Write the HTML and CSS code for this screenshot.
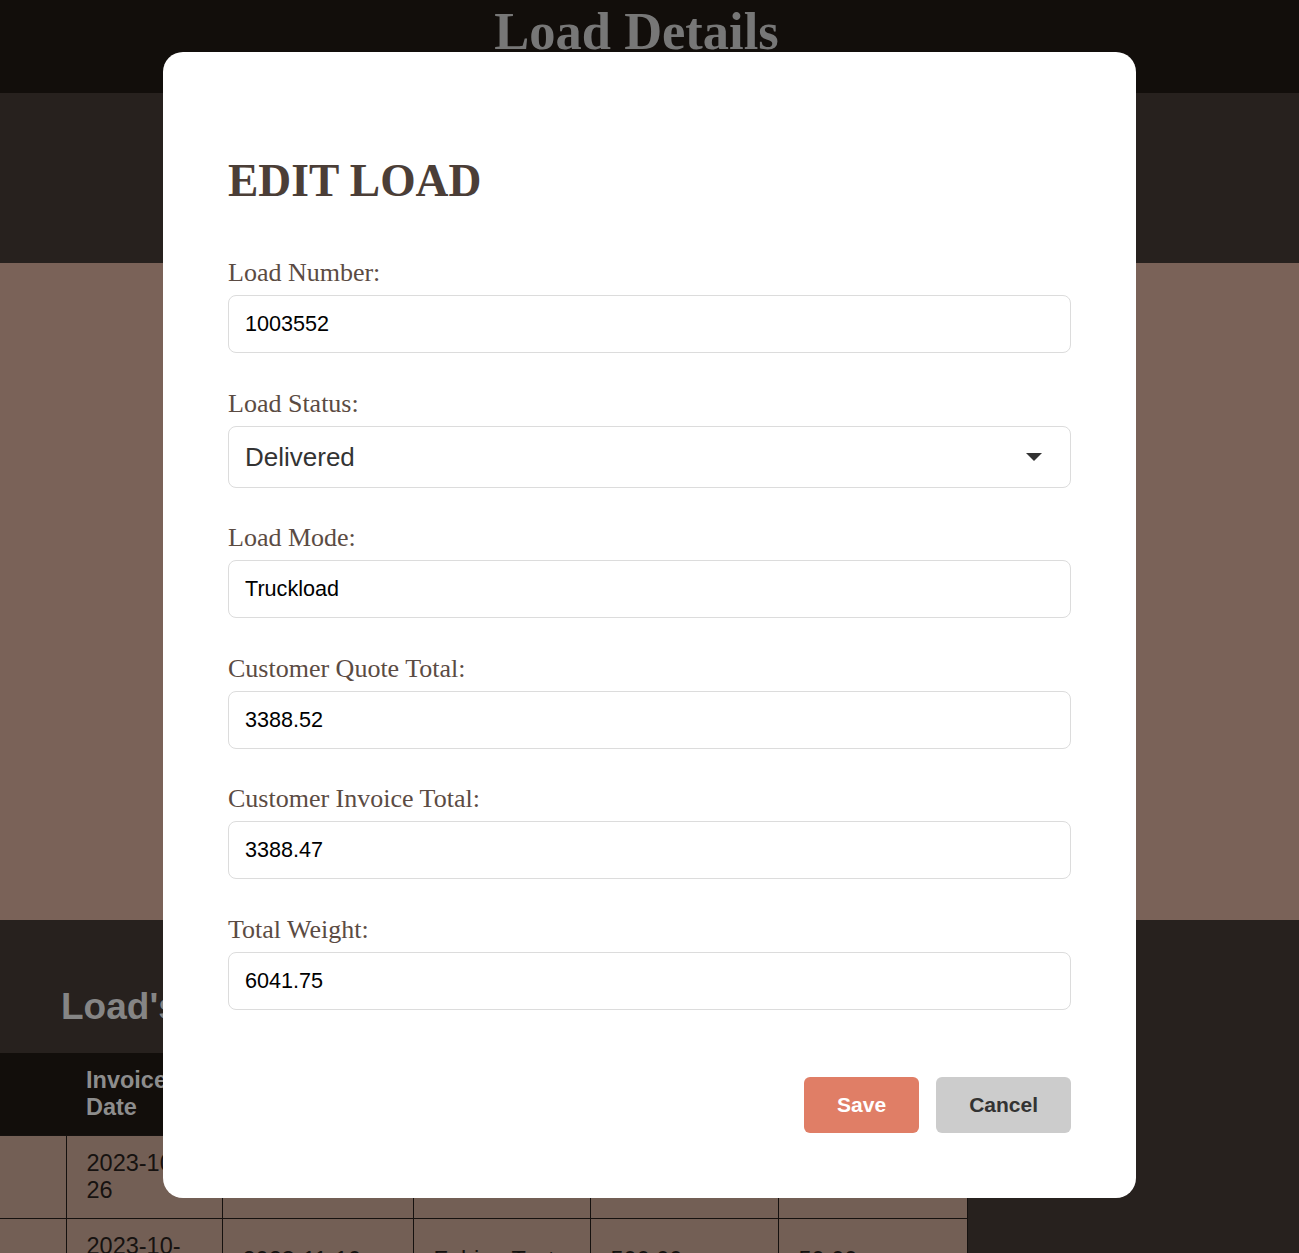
FILE: index.html
```html
<!DOCTYPE html>
<html lang="en">
<head>
<meta charset="utf-8">
<title>Load Details</title>
<link rel="stylesheet" href="styles.css">
</head>
<body>
<div class="page">
  <header class="top-bar">
    <h1 class="page-title">Load Details</h1>
  </header>
  <section class="band band-dark band-summary"></section>
  <section class="band band-brown"></section>
  <section class="band band-dark band-invoices">
    <h2 class="section-title">Load's Invoices</h2>
  </section>
  <table class="invoice-table">
    <colgroup>
      <col class="c0"><col class="c1"><col class="c2"><col class="c3"><col class="c4"><col class="c5">
    </colgroup>
    <thead>
      <tr><th></th><th>Invoice Date</th><th>Due Date</th><th>Customer</th><th>Amount</th><th>Tax</th></tr>
    </thead>
    <tbody>
      <tr><td></td><td>2023-10-26</td><td></td><td></td><td></td><td></td></tr>
      <tr><td></td><td>2023-10-26</td><td>2023-11-10</td><td>Fabian Test</td><td>500.00</td><td>50.00</td></tr>
    </tbody>
  </table>
</div>

<div class="overlay">
  <div class="modal">
    <h2 class="modal-title">EDIT LOAD</h2>
    <div class="field">
      <label class="field-label" for="num">Load Number:</label>
      <input class="field-input" id="num" type="text" value="1003552">
    </div>
    <div class="field">
      <label class="field-label" for="status">Load Status:</label>
      <div class="select-wrap">
        <select class="field-select" id="status">
          <option>Delivered</option>
        </select>
        <svg class="select-arrow" width="16" height="8" viewBox="0 0 16 8"><path d="M0 0H16L8 8Z" fill="#333"/></svg>
      </div>
    </div>
    <div class="field">
      <label class="field-label" for="mode">Load Mode:</label>
      <input class="field-input" id="mode" type="text" value="Truckload">
    </div>
    <div class="field">
      <label class="field-label" for="quote">Customer Quote Total:</label>
      <input class="field-input" id="quote" type="text" value="3388.52">
    </div>
    <div class="field">
      <label class="field-label" for="invoice">Customer Invoice Total:</label>
      <input class="field-input" id="invoice" type="text" value="3388.47">
    </div>
    <div class="field">
      <label class="field-label" for="weight">Total Weight:</label>
      <input class="field-input" id="weight" type="text" value="6041.75">
    </div>
    <div class="actions">
      <button class="btn btn-save" type="button">Save</button>
      <button class="btn btn-cancel" type="button">Cancel</button>
    </div>
  </div>
</div>
</body>
</html>
```
FILE: styles.css
```css
html, body {
  margin: 0;
  padding: 0;
  background: #27211e;
}
body {
  font-family: "Liberation Sans", Arial, sans-serif;
  overflow: hidden;
}
.page {
  width: 1299px;
  height: 1253px;
  overflow: hidden;
  background: #27211e;
}
.top-bar {
  height: 93px;
  background: #120e0b;
  display: flex;
  justify-content: center;
  padding-right: 26px;
}
.page-title {
  margin: 0;
  font-family: "Liberation Serif", "Times New Roman", serif;
  font-weight: bold;
  font-size: 52.5px;
  line-height: 62px;
  color: #777777;
}
.band-summary {
  height: 170px;
}
.band-dark {
  background: #27211e;
}
.band-brown {
  height: 657px;
  background: #7a6258;
}
.band-invoices {
  height: 133px;
  box-sizing: border-box;
  padding: 66px 0 0 61px;
}
.section-title {
  margin: 0;
  font-size: 37px;
  line-height: 42px;
  font-weight: bold;
  color: #858585;
}
.invoice-table {
  width: 967px;
  border-collapse: collapse;
  table-layout: fixed;
  font-size: 23.5px;
  line-height: 27px;
}
.c0 { width: 66px; }
.c1 { width: 156px; }
.c2 { width: 191px; }
.c3 { width: 177px; }
.c4 { width: 188px; }
.c5 { width: 189px; }
.invoice-table th {
  background: #120e0b;
  color: #8d8d8d;
  font-weight: bold;
  text-align: left;
  height: 82px;
  box-sizing: border-box;
  padding: 14px 20px;
}
.invoice-table td {
  background: #735f55;
  color: #161210;
  height: 82px;
  box-sizing: border-box;
  padding: 14px 20px;
  border: 1px solid #15110f;
  vertical-align: middle;
}
.invoice-table td:first-child {
  border-left: none;
}

/* modal */
.overlay {
  position: fixed;
  inset: 0;
  display: flex;
  justify-content: center;
  align-items: flex-start;
  padding-top: 52px;
}
.modal {
  width: 973px;
  box-sizing: border-box;
  background: #ffffff;
  border-radius: 20px;
  padding: 101px 65px 65px 65px;
}
.modal-title {
  margin: 0 0 51px 0;
  font-family: "Liberation Serif", "Times New Roman", serif;
  font-weight: bold;
  font-size: 45.5px;
  line-height: 55px;
  color: #4b3e37;
}
.field {
  margin-bottom: 36.6px;
}
.field-label {
  display: block;
  margin-bottom: 8px;
  font-family: "Liberation Serif", "Times New Roman", serif;
  font-size: 26px;
  line-height: 28px;
  color: #5b4b43;
}
.field-input,
.field-select {
  display: block;
  width: 100%;
  box-sizing: border-box;
  height: 58px;
  margin: 0;
  padding: 0 16px;
  border: 1px solid #dcdcdc;
  border-radius: 8px;
  background: #ffffff;
  font-family: "Liberation Sans", Arial, sans-serif;
  font-size: 21.6px;
  color: #000000;
  outline: none;
}
.select-wrap {
  position: relative;
}
.field-select {
  height: 62px;
  font-size: 26px;
  color: #333333;
  appearance: none;
  -webkit-appearance: none;
}
.select-arrow {
  position: absolute;
  right: 29px;
  top: 27px;
}
.actions {
  display: flex;
  justify-content: flex-end;
  gap: 17px;
  margin-top: 67px;
}
.btn {
  height: 56px;
  padding: 0 33px;
  border: none;
  border-radius: 6px;
  font-family: "Liberation Sans", Arial, sans-serif;
  font-weight: bold;
  font-size: 21px;
}
.btn-save {
  background: #e07e66;
  color: #ffffff;
}
.btn-cancel {
  background: #cccccc;
  color: #333333;
}
```
